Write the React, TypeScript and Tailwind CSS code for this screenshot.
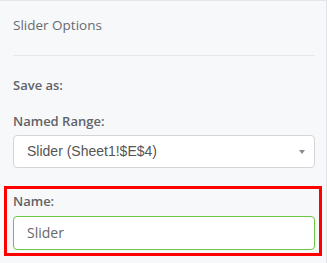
export default function App() {
  return (
    <div
      className="h-[263px] w-[327px] overflow-hidden border-t border-r border-[#e3e5e8] bg-[#f7f8fa]"
      style={{ fontFamily: '"Open Sans", sans-serif' }}
    >
      <div className="px-[13px]">
        <div className="pt-[14px] pb-[20px] text-[13.5px] text-[#676b71]">Slider Options</div>
        <div className="h-px w-[302px] bg-[#e6e8eb]" />
        <div className="mt-[20px] text-[13px] font-semibold text-[#5f6368]">Save as:</div>
        <div className="mt-[16px] text-[13px] font-semibold text-[#5f6368]">Named Range:</div>
        <div className="relative mt-[4px] flex h-[33px] w-[302px] items-center rounded-[4px] border border-[#d3d5d8] bg-white pl-[13px]">
          <span
            className="text-[14px] text-[#555555]"
            style={{ fontFamily: '"Liberation Sans", Arial, sans-serif' }}
          >
            Slider (Sheet1!$E$4)
          </span>
          <span className="absolute right-[9px] top-[14px] h-0 w-0 border-x-[3.5px] border-t-[4px] border-x-transparent border-t-[#8a8a8a]" />
        </div>
      </div>
      <div className="ml-[4px] mt-[18px] h-[70px] w-[318px] border-[3px] border-[#ff0000] px-[6px] pt-[3px]">
        <div className="text-[13px] font-semibold text-[#5f6368]">Name:</div>
        <div className="mt-[4px] flex h-[34px] w-[302px] items-center rounded-[4px] border border-[#6cc644] bg-white pl-[13px] text-[14px] text-[#666666]">
          Slider
        </div>
      </div>
    </div>
  );
}
